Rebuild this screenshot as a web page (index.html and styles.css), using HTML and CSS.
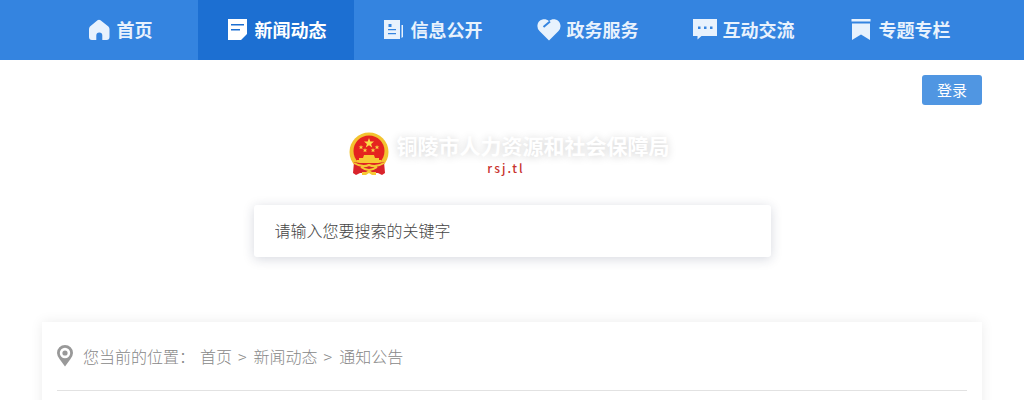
FILE: index.html
```
<!DOCTYPE html>
<html lang="zh-CN">
<head>
  <meta charset="UTF-8">
  <meta name="viewport" content="width=device-width, initial-scale=1.0">
  <title>铜陵市人力资源和社会保障局</title>
  <link rel="stylesheet" href="styles.css">
</head>
<body>

  <nav class="nav">
    <div class="container nav-list">
      <a href="#">
        <svg width="22" height="22" viewBox="0 0 22 22"><path fill="currentColor" d="M9.500 1.300Q11 0 12.500 1.300L20.400 7.500Q21.500 8.500 21.500 10V18Q21.500 21 18.500 21H14.300V16.500A3 3 0 0 0 8.300 16.500V21H4Q1 21 1 18V10Q1 8.500 2 7.500Z"/></svg>
        <span>首页</span>
      </a>
      <a href="#" class="active">
        <svg width="22" height="22" viewBox="0 0 22 22"><path fill="currentColor" fill-rule="evenodd" d="M2 0H21V15L15 21H2ZM5 5V6.500H18V5ZM5 10V11.500H14V10Z"/></svg>
        <span>新闻动态</span>
      </a>
      <a href="#">
        <svg width="22" height="22" viewBox="0 0 22 22"><path fill="currentColor" fill-rule="evenodd" d="M2 1H18V20H2ZM6.500 5V8H9.500V5ZM6 10V11.200H14V10ZM6 14V15.200H14V14ZM19.500 6H21V18L19.500 19Z"/></svg>
        <span>信息公开</span>
      </a>
      <a href="#">
        <svg class="wide" width="24" height="22" viewBox="0 0 24 22"><path fill="currentColor" d="M12 21.500L2.500 12Q0 9.500 0.500 6C1.300 0.500 8 -1.500 12 2.200C16 -1.500 22.500 0.500 23.400 6Q24 9.500 21.500 12Z"/><path class="cut" d="M13 2.500L6.500 8"/></svg>
        <span>政务服务</span>
      </a>
      <a href="#">
        <svg class="wide" width="24" height="22" viewBox="0 0 24 22"><path fill="currentColor" fill-rule="evenodd" d="M0 0H24V17H8.500L4.500 20.500V17H0ZM5 7.500V10H7.500V7.500ZM11 7.500V10H13.500V7.500ZM17 7.500V10H19.500V7.500Z"/></svg>
        <span>互动交流</span>
      </a>
      <a href="#">
        <svg width="22" height="22" viewBox="0 0 22 22"><path fill="currentColor" d="M1.500 0H20.500V2.500H1.500ZM2 4.500H20V21L11 15.500L2 21Z"/></svg>
        <span>专题专栏</span>
      </a>
    </div>
  </nav>

  <header class="container header">
    <a href="#" class="login">登录</a>

    <a href="#" class="logo">
      <svg width="40" height="44" viewBox="0 0 40 44">
        <circle cx="20" cy="20" r="19.500" fill="#f3c32f"/>
        <circle cx="20" cy="19" r="15.500" fill="#e5231f"/>
        <path fill="#fbe04a" d="M20 6L21.300 9.600H25L22.100 11.900L23.200 15.500L20 13.300L16.800 15.500L17.900 11.900L15 9.600H18.700Z"/>
        <g fill="#f9d442">
          <path id="star" d="M12 13L12.600 14.600H14.300L13 15.600L13.500 17.300L12 16.300L10.500 17.300L11 15.600L9.700 14.600H11.400Z"/>
          <use href="#star" x="16"/>
          <use href="#star" x="4" y="3"/>
          <use href="#star" x="12" y="3"/>
        </g>
        <path fill="#f7c934" d="M15 23H25L26 26H30V28H32V31H8V28H10V26H14Z"/>
        <path fill="#d9232b" d="M5 30Q12 31 20 33Q28 31 35 30L36 41L33 43L29 41H11L7 43L4 41Z"/>
        <path fill="none" stroke="#f7c934" stroke-width="2" d="M5 31Q13 36 20 33Q27 36 35 31M12 35Q20 41 28 35"/>
        <path fill="#f7c934" d="M13 40H17L20 38L23 40H27V43H23L20 41L17 43H13Z"/>
      </svg>
      <span class="logo-text">
        <span class="site-name">铜陵市人力资源和社会保障局</span>
        <span class="site-domain">rsj.tl</span>
      </span>
    </a>

    <form class="search">
      <input type="text" placeholder="请输入您要搜索的关键字" aria-label="请输入您要搜索的关键字">
    </form>
  </header>

  <main class="container content">
    <div class="position">
      <svg width="16" height="22" viewBox="0 0 16 22"><path fill="currentColor" fill-rule="evenodd" d="M8 0A8 8 0 0 1 16 8Q16 10.500 13.500 14L8 21.500L2.500 14Q0 10.500 0 8A8 8 0 0 1 8 0ZM8 2.800A5.200 5.200 0 1 0 8 13.200A5.200 5.200 0 1 0 8 2.800Z"/><circle cx="8" cy="8" r="2.600" fill="currentColor"/></svg>
      <span class="label">您当前的位置：</span>
      <a href="#">首页</a>
      <span class="sep">&gt;</span>
      <a href="#">新闻动态</a>
      <span class="sep">&gt;</span>
      <a href="#">通知公告</a>
    </div>
  </main>

</body>
</html>
```
FILE: styles.css
```
* {
  box-sizing: border-box;
}
body {
  margin: 0;
  font-family: "Noto Sans CJK SC", sans-serif;
  font-size: 16px;
  background-color: #fff;
}
a {
  color: inherit;
  text-decoration: none;
}
.container {
  width: 92%;
  max-width: 940px;
  margin: 0 auto;
}
.nav {
  background-color: #3484e0;
}
.nav-list {
  display: flex;
}
.nav a {
  flex: 0 1 156px;
  height: 60px;
  display: flex;
  align-items: center;
  justify-content: center;
  gap: 7px;
  color: #e8f2fd;
  font-size: 18px;
  font-weight: bold;
  white-space: nowrap;
}
.nav a.active {
  background-color: #1c6fd2;
  color: #fff;
}
.nav span {
  padding-bottom: 2px;
}
.nav .wide {
  margin: 0 -1px;
}
.nav .cut {
  fill: none;
  stroke: #3484e0;
  stroke-width: 2;
}
.header {
  display: flex;
  flex-direction: column;
  align-items: center;
  padding: 15px 0 65px;
}
.login {
  align-self: flex-end;
  width: 60px;
  line-height: 30px;
  border-radius: 3px;
  background-color: #5096e2;
  color: #fff;
  font-size: 15px;
  text-align: center;
}
.logo {
  display: flex;
  gap: 8px;
  margin: 26px 6px 28px 0;
}
.logo svg {
  margin-top: 1px;
}
.logo-text {
  display: flex;
  flex-direction: column;
  align-items: center;
}
.site-name {
  color: #fff;
  font-size: 21px;
  font-weight: bold;
  line-height: 28px;
  text-shadow: 0 1px 8px rgba(0, 0, 0, 0.18);
}
.site-domain {
  color: #c8322e;
  font-size: 12px;
  font-weight: 500;
  line-height: 18px;
  letter-spacing: 2px;
  padding-right: 54px;
}
.search {
  width: 55%;
}
.search input {
  display: block;
  width: 100%;
  height: 52px;
  padding: 0 21px 2px;
  border: none;
  border-radius: 3px;
  background-color: #fff;
  box-shadow: 0 2px 12px rgba(30, 40, 80, 0.18);
  font-family: inherit;
  font-size: 16px;
  font-weight: 300;
  outline: none;
}
.search input::placeholder {
  color: #444;
  opacity: 1;
}
.content {
  padding: 0 15px 40px;
  background-color: #fff;
  box-shadow: 0 0 12px rgba(0, 0, 0, 0.08);
}
.position {
  display: flex;
  align-items: center;
  height: 69px;
  border-bottom: 1px solid #e2e2e2;
  color: #888;
  font-weight: 300;
}
.position svg {
  color: #999;
}
.position .label {
  margin: 0 5px 0 10px;
}
.position .sep {
  margin: 0 7px 0 6px;
}
```
